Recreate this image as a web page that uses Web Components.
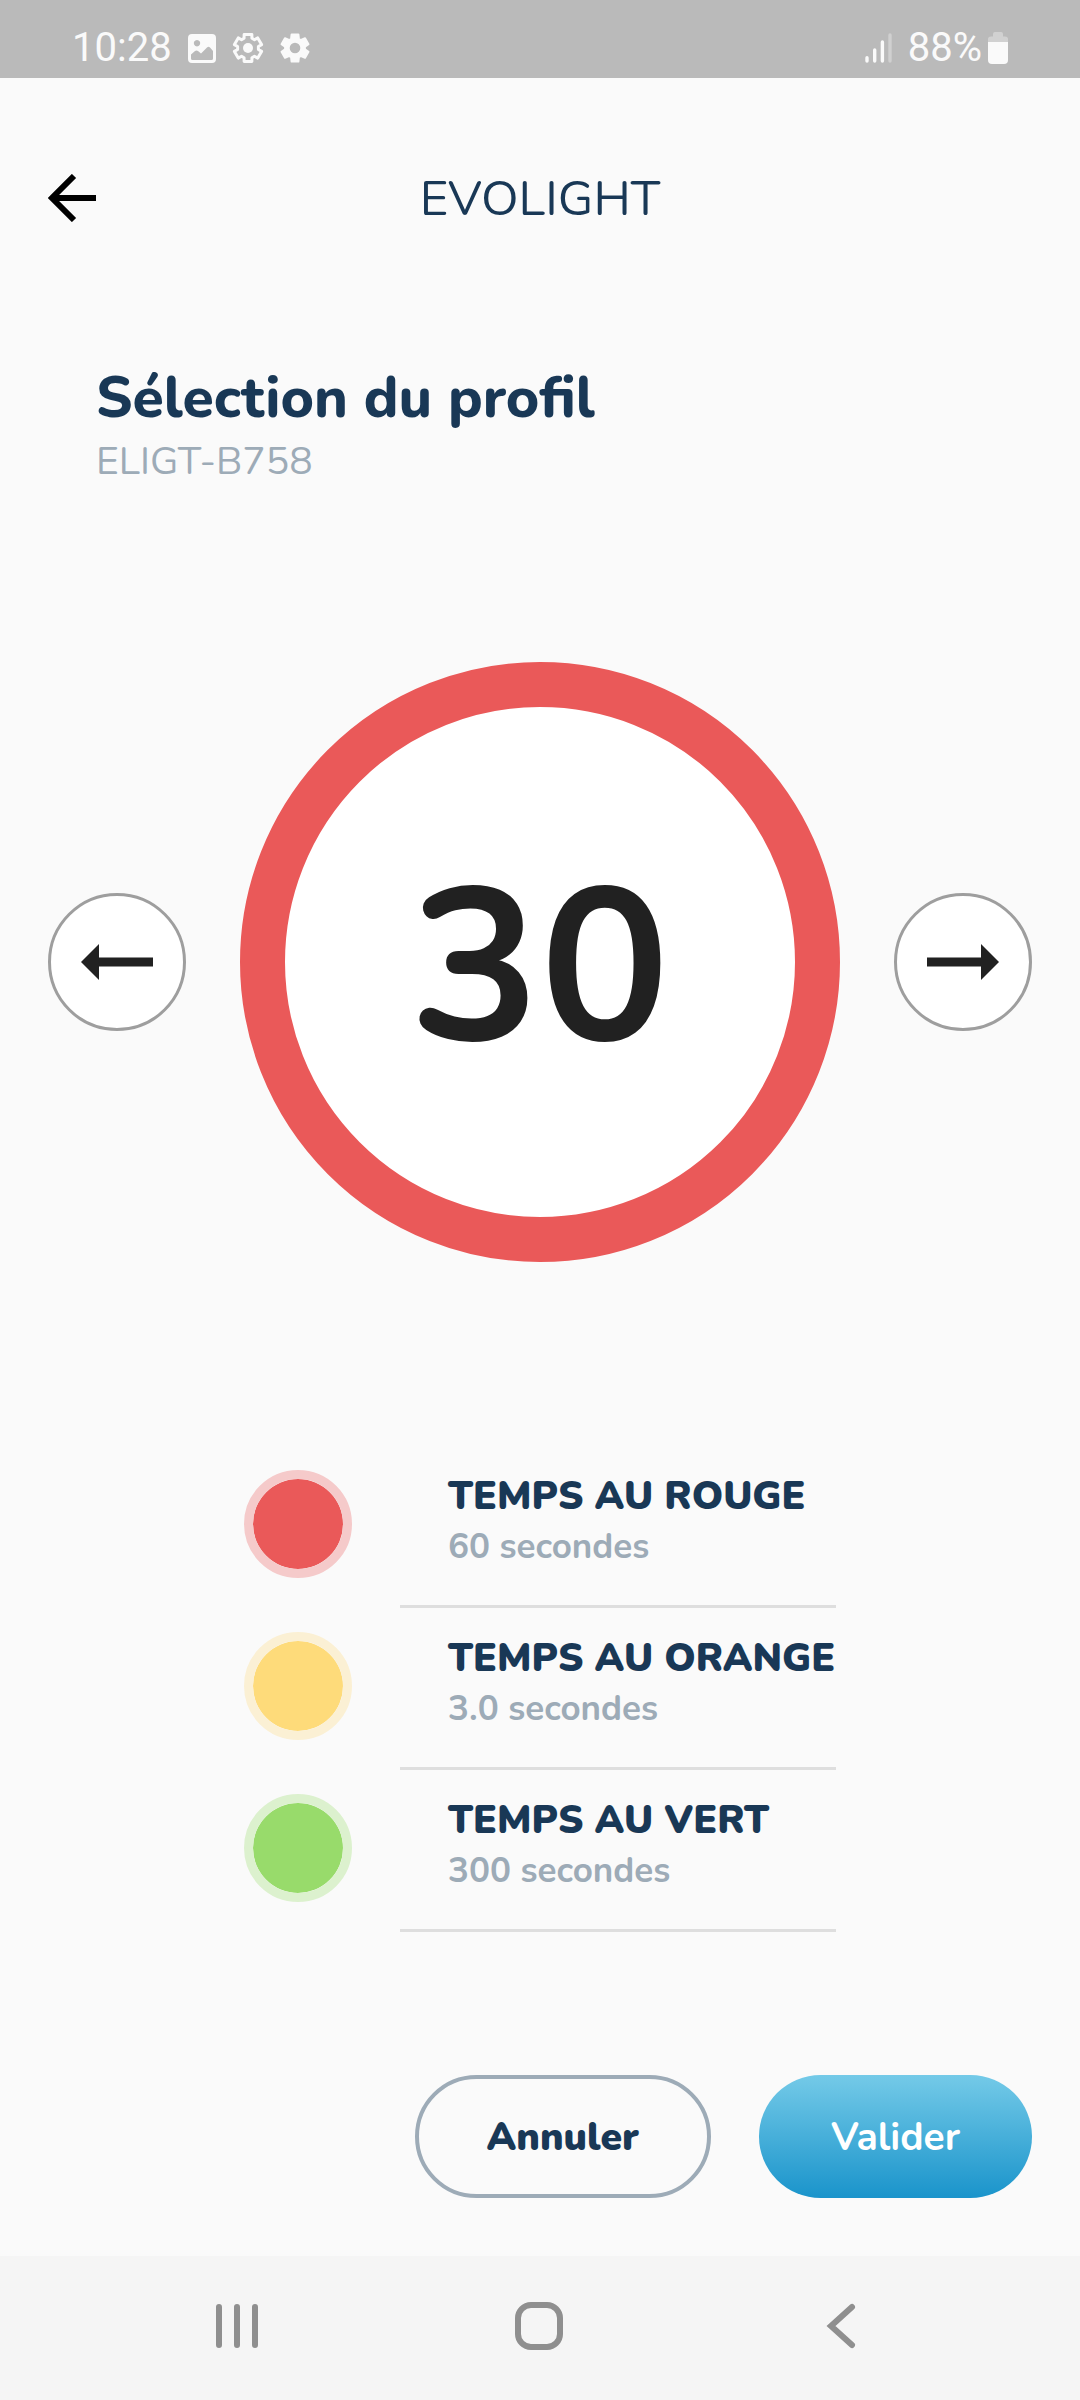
<!DOCTYPE html>
<html lang="fr">
<head>
<meta charset="utf-8">
<meta name="viewport" content="width=device-width, initial-scale=1">
<title>Evolight</title>
<style>
  :root {
    --navy: #193856;
    --slate: #9dabb7;
    --ink: #212121;
    --red: #ea5959;
    --gutter: 48px;
  }
  body {
    margin: 0;
    background: #fafafa;
    color: var(--navy);
    font-family: Nunito, Lato, sans-serif;
  }
</style>
</head>
<body>
<profile-screen></profile-screen>

<script>
const define = (name, html, setup) => customElements.define(name, class extends HTMLElement {
  constructor() {
    super();
    this.attachShadow({ mode: 'open' }).innerHTML = html;
  }
  connectedCallback() {
    if (setup) setup(this, this.shadowRoot);
  }
});

// Outline of a six-toothed cog centred on 0,0.
const cog = (outer, inner, tip, root) => {
  const pts = [];
  for (let k = 0; k < 6; k++) {
    for (const [r, a] of [[inner, -root], [outer, -tip], [outer, tip], [inner, root]]) {
      const t = (k * 60 + a - 90) * Math.PI / 180;
      pts.push((r * Math.cos(t)).toFixed(2) + ' ' + (r * Math.sin(t)).toFixed(2));
    }
  }
  return 'M' + pts.join('L') + 'Z';
};

define('status-bar', `
  <style>
    :host { display: flex; justify-content: space-between; align-items: center; box-sizing: border-box;
      height: 78px; padding: 18px 72px 0; background: #bababa; color: #fafafa;
      font: 40px/48px Roboto, sans-serif; }
    div { display: flex; align-items: center; }
    svg { display: block; }
    .left { gap: 16px; }
    .right { gap: 16px; }
    .power { gap: 6px; }
  </style>
  <div class="left">
    <span>10:28</span>
    <svg width="28" height="29" viewBox="0 0 28 29" aria-hidden="true">
      <path fill="#fafafa" fill-rule="evenodd" d="M4 0H24Q28 0 28 4V25Q28 29 24 29H4Q0 29 0 25V4Q0 0 4 0ZM9 6a3.2 3.2 0 1 0 .01 0ZM3 20.500V24.500Q3 26 4.500 26H23.500Q25 26 25 24.500V17L22 13.500Q20.500 12 19 13.500L13 19.500L10 17Q8.500 16 7 17Z"/>
    </svg>
    <svg width="32" height="32" viewBox="-16 -16 32 32" aria-hidden="true">
      <path d="${cog(14, 10.5, 16, 22)}" fill="none" stroke="#fafafa" stroke-width="3" stroke-linejoin="round"/>
      <circle r="5" fill="#fafafa"/>
    </svg>
    <svg width="30" height="32" viewBox="-15 -16 30 32" aria-hidden="true">
      <path d="${cog(14, 10, 14, 23)}" fill="#fafafa" stroke="#fafafa" stroke-width="2" stroke-linejoin="round"/>
      <circle r="5.300" fill="#bababa"/>
    </svg>
  </div>
  <div class="right">
    <svg width="27" height="30" viewBox="0 0 27 30" stroke="#fafafa" stroke-width="3.400" stroke-linecap="round" aria-hidden="true">
      <path d="M2 24.700V28M9.700 17V28M17.400 9V28"/><path d="M25 2V28" opacity=".35"/>
    </svg>
    <div class="power">
      <span>88%</span>
      <svg width="20" height="32" viewBox="0 0 20 32" aria-hidden="true">
        <path fill="#d1d1d1" d="M0 10V7Q0 4.500 3 4.500H5V2Q5 0 7 0H13Q15 0 15 2V4.500H17Q20 4.500 20 7V10Z"/>
        <path fill="#fafafa" d="M0 10H20V28Q20 32 16 32H4Q0 32 0 28Z"/>
      </svg>
    </div>
  </div>`);

define('app-header', `
  <style>
    :host { display: grid; grid-template-columns: 48px 1fr 48px; align-items: center;
      padding: 0 var(--gutter); height: 240px; box-sizing: border-box; }
    button { border: 0; padding: 0; background: none; width: 48px; height: 48px; }
    svg { display: block; }
    h1 { margin: 0; padding-top: 2px; text-align: center; font-size: 49px; line-height: 64px; font-weight: 400; }
  </style>
  <button type="button" aria-label="Retour">
    <svg width="48" height="48" viewBox="0 0 48 48"><path d="M48 24H6M26 2L4 24L26 46" fill="none" stroke="#000" stroke-width="6"/></svg>
  </button>
  <h1><slot></slot></h1>`);

define('page-title', `
  <style>
    :host { display: block; padding: 42px 96px 0; }
    h2 { margin: 0; font-size: 57px; line-height: 76px; font-weight: 850; }
    p { margin: 0; font-size: 39px; line-height: 52px; color: var(--slate); }
  </style>
  <h2><slot></slot></h2>
  <p><slot name="device"></slot></p>`);

define('arrow-button', `
  <style>
    :host { display: block; }
    :host([direction="next"]) svg { transform: scaleX(-1); }
    button { display: grid; place-items: center; box-sizing: border-box; width: 138px; height: 138px; padding: 0;
      border: 3px solid #9e9e9e; border-radius: 50%; background: #fff; }
    svg { display: block; }
  </style>
  <button type="button">
    <svg width="72" height="36" viewBox="0 0 72 36"><path fill="#212121" d="M0 18L18 0V13.500H72V22.500H18V36Z"/></svg>
  </button>`, (host, root) => root.querySelector('button').setAttribute('aria-label', host.getAttribute('label')));

define('speed-sign', `
  <style>
    :host { display: grid; place-items: center; box-sizing: border-box; width: 600px; aspect-ratio: 1;
      border: 45px solid var(--red); border-radius: 50%; background: #fff; color: var(--ink);
      font-size: 216px; line-height: 260px; font-weight: 700; }
    span { padding-top: 12px; }
  </style>
  <span><slot></slot></span>`);

define('profile-picker', `
  <style>
    :host { display: flex; align-items: center; justify-content: space-between; padding: 0 var(--gutter); }
  </style>
  <arrow-button label="Profil précédent"></arrow-button>
  <speed-sign><slot></slot></speed-sign>
  <arrow-button label="Profil suivant" direction="next"></arrow-button>`);

define('phase-row', `
  <style>
    :host { display: flex; align-items: flex-start; gap: 48px; height: 162px; }
    i { flex: none; box-sizing: border-box; width: 108px; height: 108px; margin-top: 24px; border-radius: 50%;
      border: 9px solid var(--halo); background: var(--lamp); background-clip: padding-box; }
    div { flex: 1; box-sizing: border-box; height: 100%; padding: 25px 0 0 48px; border-bottom: 3px solid #dedede; }
    h3 { margin: 0; font-size: 39px; line-height: 52px; font-weight: 900; white-space: nowrap; }
    p { margin: 0; font-size: 35px; line-height: 48px; font-weight: 700; color: var(--slate); }
  </style>
  <i></i>
  <div><h3><slot></slot></h3><p><slot name="time"></slot></p></div>`);

define('phase-list', `
  <style>
    :host { display: flex; flex-direction: column; width: 592px; margin: 0 auto; }
  </style>
  <slot></slot>`);

define('pill-button', `
  <style>
    :host { display: block; }
    button { box-sizing: border-box; height: 123px; padding: 2px 72px 0; border: 0; border-radius: 62px; white-space: nowrap;
      font: 700 39px/48px Nunito, Lato, sans-serif; color: #fff; background: linear-gradient(#74cae8, #1a94cb); }
    :host([outline]) button { padding: 2px 68px 0; border: 4px solid var(--slate); background: none; color: var(--navy); font-weight: 900; }
  </style>
  <button type="button"><slot></slot></button>`);

define('action-bar', `
  <style>
    :host { display: flex; justify-content: flex-end; gap: 48px; padding: 0 var(--gutter) 58px; }
  </style>
  <slot></slot>`);

define('system-nav', `
  <style>
    :host { display: flex; box-sizing: border-box; height: 144px; padding: 0 8%; background: #f5f5f5; }
    button { flex: 1; display: grid; place-items: center; border: 0; padding: 0 2px 4px 0; background: none; }
    svg { display: block; fill: none; stroke: #8f8f8f; stroke-width: 6; stroke-linecap: round; }
  </style>
  <button type="button" aria-label="Applications récentes"><svg width="48" height="48" viewBox="0 0 48 48"><path d="M6 5V43M24 5V43M42 5V43"/></svg></button>
  <button type="button" aria-label="Accueil"><svg width="48" height="48" viewBox="0 0 48 48"><rect x="3" y="3" width="42" height="42" rx="13"/></svg></button>
  <button type="button" aria-label="Précédent"><svg width="48" height="48" viewBox="0 0 48 48"><path d="M35 5L14 24L35 43"/></svg></button>`);

define('profile-screen', `
  <style>
    :host { display: flex; flex-direction: column; min-height: 100vh; }
    main { flex: 1; display: flex; flex-direction: column; }
    profile-picker { margin-top: 174px; }
    phase-list { margin-top: 184px; }
    action-bar { margin-top: auto; }
  </style>
  <status-bar></status-bar>
  <app-header>EVOLIGHT</app-header>
  <main>
    <page-title>Sélection du profil<span slot="device">ELIGT-B758</span></page-title>
    <profile-picker>30</profile-picker>
    <phase-list>
      <phase-row style="--lamp:#ea5959;--halo:#f5caca">TEMPS AU ROUGE<span slot="time">60 secondes</span></phase-row>
      <phase-row style="--lamp:#fedb7a;--halo:#fbf0d4">TEMPS AU ORANGE<span slot="time">3.0 secondes</span></phase-row>
      <phase-row style="--lamp:#98db6b;--halo:#dcf1ce">TEMPS AU VERT<span slot="time">300 secondes</span></phase-row>
    </phase-list>
    <action-bar>
      <pill-button outline>Annuler</pill-button>
      <pill-button>Valider</pill-button>
    </action-bar>
  </main>
  <system-nav></system-nav>`);
</script>
</body>
</html>
